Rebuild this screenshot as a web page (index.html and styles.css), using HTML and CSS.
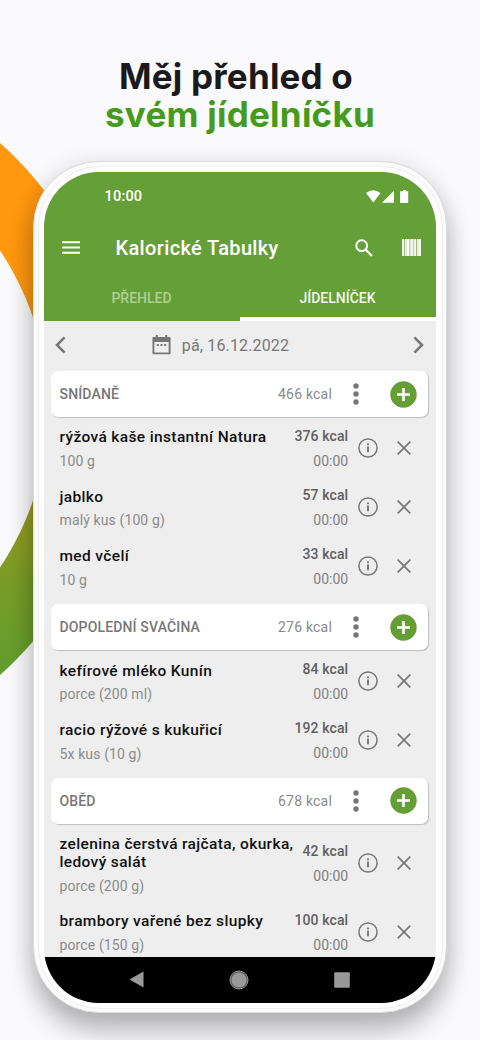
FILE: index.html
```html
<!DOCTYPE html>
<html lang="cs">
<head>
<meta charset="utf-8">
<title>Kalorické Tabulky</title>
<link rel="stylesheet" href="styles.css">
</head>
<body>
<svg class="defs" width="0" height="0">
  <symbol id="info" viewBox="0 0 20 20"><circle cx="10" cy="10" r="9.1" fill="none" stroke="currentColor" stroke-width="1.5"/><path d="M10 8.6v5.7M10 5.4v1.9" stroke="currentColor" stroke-width="1.9"/></symbol>
  <symbol id="close" viewBox="0 0 14 14"><path d="M.7.7l12.6 12.6M13.3.7L.7 13.3" fill="none" stroke="currentColor" stroke-width="1.7"/></symbol>
  <symbol id="dots" viewBox="0 0 6 22"><circle cx="3" cy="3" r="2.7"/><circle cx="3" cy="11" r="2.7"/><circle cx="3" cy="19" r="2.7"/></symbol>
  <symbol id="plus" viewBox="0 0 27 27"><circle cx="13.5" cy="13.5" r="13.2" fill="#649e34"/><path d="M13.5 7v13M7 13.5h13" stroke="#fff" stroke-width="2.7"/></symbol>
</svg>
<main class="stage">
  <svg class="ring" width="130" height="760" viewBox="0 0 130 760">
    <defs><linearGradient id="rg" x1="0" y1="0" x2="0" y2="1"><stop offset="0" stop-color="#ff970f"/><stop offset=".3" stop-color="#ff970f"/><stop offset=".7" stop-color="#799c27"/><stop offset=".88" stop-color="#559f31"/></linearGradient></defs>
    <rect width="130" height="760" fill="url(#rg)" mask="url(#rm)"/>
    <mask id="rm"><circle cx="-238" cy="359" r="357" fill="#fff"/><circle cx="-238" cy="359" r="286" fill="#000"/></mask>
  </svg>
  <h1 class="headline"><span class="dark">Měj přehled o</span><span class="green">svém jídelníčku</span></h1>
  <div class="phone"><div class="bezel"><div class="screen">
    <header class="top">
      <div class="status"><span class="clock">10:00</span>
        <svg width="44" height="14" viewBox="0 0 44 14" fill="#fff"><path d="M0 3Q7-2.4 14.5 3L7.3 12.6z"/><path d="M28 .8v11.9H16z"/><path d="M37 0h3v1.2h2.2V13h-8.1V1.2H37z"/></svg>
      </div>
      <div class="appbar">
        <svg class="menu" width="18" height="13" viewBox="0 0 18 13"><path d="M0 1.2h18M0 6.4h18M0 11.7h18" stroke="#fff" stroke-width="2"/></svg>
        <span class="apptitle">Kalorické Tabulky</span>
        <svg class="search" width="18" height="18" viewBox="0 0 18 18" fill="none" stroke="#fff" stroke-width="2.1"><circle cx="6.7" cy="6.7" r="5.4"/><path d="M10.6 10.6l6.4 6.4"/></svg>
        <svg class="barcode" width="19" height="17" viewBox="0 0 19 17" fill="#fff"><path fill="#d5e5c8" d="M0 0h19v17H0z"/><path d="M0 0h2v17H0zM3 0h1v17H3zM5 0h2.5v17H5zM8.3 0h1.2v17H8.3zM10.3 0h1.3v17h-1.3zM12.2 0h2v17h-2zM15 0h1.2v17H15zM17 0h2v17h-2z"/><path fill="#83b05f" d="M2 0h.8v17H2zM7.5 0h.7v17h-.7zM11.6 0h.6v17h-.6zM14.2 0h.8v17h-.8z"/></svg>
      </div>
      <nav class="tabs"><span class="tab"><span class="t1">PŘEHLED</span></span><span class="tab active"><span class="t2">JÍDELNÍČEK</span></span></nav>
    </header>
    <section class="content">
      <div class="datebar">
        <svg width="11" height="18" viewBox="0 0 11 18" fill="none" stroke="#777" stroke-width="2.6"><path d="M9.6 1.3L2 9l7.6 7.7"/></svg>
        <span class="date"><svg width="19" height="20" viewBox="0 0 19 20"><path d="M1.4 3h16.2v15.4H1.4z" fill="none" stroke="#777" stroke-width="1.9" stroke-linejoin="round"/><path d="M1 3h17v4H1zM3.8 0h2v4h-2zM13.2 0h2v4h-2z" fill="#777"/><path d="M4.8 9.1h2v2h-2zM8.5 9.1h2v2h-2zM12.2 9.1h2v2h-2z" fill="#777"/></svg><span class="datetext">pá, 16.12.2022</span></span>
        <svg width="11" height="18" viewBox="0 0 11 18" fill="none" stroke="#777" stroke-width="2.6"><path d="M1.4 1.3L9 9l-7.6 7.7"/></svg>
      </div>
      <div class="meal"><span class="mealname">SNÍDANĚ</span><span class="total">466 kcal</span><svg class="dots"><use href="#dots"/></svg><svg class="plus"><use href="#plus"/></svg></div>
      <div class="items">
        <div class="item"><div class="food"><b>rýžová kaše instantní Natura</b><span>100 g</span></div><div class="energy"><b>376 kcal</b><span>00:00</span></div><svg class="info"><use href="#info"/></svg><svg class="close"><use href="#close"/></svg></div>
        <div class="item"><div class="food"><b>jablko</b><span>malý kus (100 g)</span></div><div class="energy"><b>57 kcal</b><span>00:00</span></div><svg class="info"><use href="#info"/></svg><svg class="close"><use href="#close"/></svg></div>
        <div class="item"><div class="food"><b>med včelí</b><span>10 g</span></div><div class="energy"><b>33 kcal</b><span>00:00</span></div><svg class="info"><use href="#info"/></svg><svg class="close"><use href="#close"/></svg></div>
      </div>
      <div class="meal"><span class="mealname">DOPOLEDNÍ SVAČINA</span><span class="total">276 kcal</span><svg class="dots"><use href="#dots"/></svg><svg class="plus"><use href="#plus"/></svg></div>
      <div class="items">
        <div class="item"><div class="food"><b>kefírové mléko Kunín</b><span>porce (200 ml)</span></div><div class="energy"><b>84 kcal</b><span>00:00</span></div><svg class="info"><use href="#info"/></svg><svg class="close"><use href="#close"/></svg></div>
        <div class="item"><div class="food"><b>racio rýžové s kukuřicí</b><span>5x kus (10 g)</span></div><div class="energy"><b>192 kcal</b><span>00:00</span></div><svg class="info"><use href="#info"/></svg><svg class="close"><use href="#close"/></svg></div>
      </div>
      <div class="meal"><span class="mealname">OBĚD</span><span class="total">678 kcal</span><svg class="dots"><use href="#dots"/></svg><svg class="plus"><use href="#plus"/></svg></div>
      <div class="items">
        <div class="item"><div class="food"><b>zelenina čerstvá rajčata, okurka,<br>ledový salát</b><span>porce (200 g)</span></div><div class="energy"><b>42 kcal</b><span>00:00</span></div><svg class="info"><use href="#info"/></svg><svg class="close"><use href="#close"/></svg></div>
        <div class="item"><div class="food"><b>brambory vařené bez slupky</b><span>porce (150 g)</span></div><div class="energy"><b>100 kcal</b><span>00:00</span></div><svg class="info"><use href="#info"/></svg><svg class="close"><use href="#close"/></svg></div>
      </div>
    </section>
    <footer class="navbar">
      <svg width="15" height="17" viewBox="0 0 15 17"><path d="M14.5.5v16L.5 8.5z" fill="#999"/></svg>
      <svg width="20" height="20" viewBox="0 0 20 20"><circle cx="10" cy="10" r="9" fill="#555" stroke="#999" stroke-width="1"/><circle cx="10" cy="10" r="7.6" fill="#999"/></svg>
      <svg width="16" height="16" viewBox="0 0 16 16"><rect x=".2" y=".2" width="15.6" height="15.6" rx="1" fill="#999"/></svg>
    </footer>
  </div></div></div>
</main>
</body>
</html>
```
FILE: styles.css
```css
* { box-sizing: border-box; }
body { margin: 0; background: #fafafc; font-family: Roboto, sans-serif; }
svg { display: block; flex: none; }
.defs { position: absolute; }
.stage { position: relative; width: 480px; height: 1040px; overflow: hidden; padding-top: 57px; }
.ring { position: absolute; left: 0; top: 50px; }
.headline { position: relative; margin: 0; height: 104px; display: flex; flex-direction: column; align-items: center; font: 700 35px/38px Inter, sans-serif; }
.headline span { white-space: nowrap; }
.dark { color: #1a1a1c; letter-spacing: .2px; margin-right: 8px; }
.green { color: #459b1c; letter-spacing: .25px; }
.phone { position: relative; width: 414px; height: 852px; margin-left: 33px; padding: 3.5px; border-radius: 66px; background: #fbfbfb; border: 1px solid #dcdcde; box-shadow: 0 20px 26px rgba(0,0,0,.22), 0 4px 24px rgba(0,0,0,.14); }
.bezel { height: 100%; padding: 5px; border: 1px solid #ededee; border-radius: 62px; background: #fff; }
.screen { height: 831px; width: 392px; border-radius: 55px; overflow: hidden; display: flex; flex-direction: column; background: #eee; }
.top { height: 149.5px; background: #659f37; flex: none; color: #fff; }
.status { height: 50px; display: flex; align-items: center; justify-content: space-between; padding: 1px 25.5px 0 61px; }
.clock { font: 500 14.5px/20px Roboto, sans-serif; letter-spacing: .2px; }
.appbar { height: 52px; display: flex; align-items: center; padding-left: 18px; }
.apptitle { font-weight: 500; font-size: 20px; line-height: 26px; letter-spacing: .35px; margin-left: 36px; width: 203px; flex: none; }
.search { margin-left: 36px; }
.barcode { margin-left: 29.5px; }
.tabs { height: 47.5px; display: grid; grid-template-columns: 1fr 1fr; font-weight: 500; font-size: 14px; }
.tab { display: flex; align-items: center; justify-content: center; color: #b0d094; padding-top: 2px; }
.active { color: #f4f8ef; border-bottom: 4px solid #fff; padding-top: 6px; }
.content { flex: 1; overflow: hidden; padding: 0 8px 0 7.5px; color: #777; }
.datebar { height: 50px; display: flex; align-items: center; justify-content: space-between; padding: 0 3.5px 2px 4px; }
.date { display: flex; align-items: center; gap: 11px; margin-right: 38px; }
.datetext { font-size: 16px; line-height: 22px; letter-spacing: .15px; padding-top: 1px; }
.meal { height: 46px; border-radius: 7px; background: #fff; box-shadow: 1px 1px 1px rgba(0,0,0,.2); display: flex; align-items: center; padding: 0 11px 0 8.5px; }
.mealname { font-weight: 500; font-size: 14px; letter-spacing: .15px; flex: 1; }
.total { font-size: 14px; letter-spacing: .2px; color: #8a8a8a; }
.dots { width: 6px; height: 22px; margin: 0 31px 0 20.5px; fill: #777; }
.plus { width: 27px; height: 27px; }
.items { padding: 1px 0 8px; }
.item { min-height: 59.4px; display: flex; align-items: center; padding: 7px 17px 7px 8.5px; }
.food { flex: 1; min-width: 0; white-space: nowrap; padding-top: 2px; }
.food b, .energy b { display: block; font-weight: 500; }
.food b { font-size: 15.5px; line-height: 18.5px; padding-top: 1px; margin-bottom: -1px; color: #111; letter-spacing: .36px; }
.food span { display: block; font-size: 14px; line-height: 18px; margin-top: 6px; color: #8b8b8b; letter-spacing: .12px; }
.energy { text-align: right; font-size: 14px; padding-top: 1px; }
.energy b { line-height: 18px; color: #606060; letter-spacing: .1px; }
.energy span { display: block; line-height: 18px; margin-top: 7px; color: #808080; }
.info { width: 20px; height: 20px; margin: 0 19px 0 9.3px; color: #777; }
.close { width: 14px; height: 14px; color: #777; }
.navbar { height: 46px; flex: none; background: #000; display: flex; align-items: center; justify-content: space-between; padding: 0 86px 0 85px; }
```
